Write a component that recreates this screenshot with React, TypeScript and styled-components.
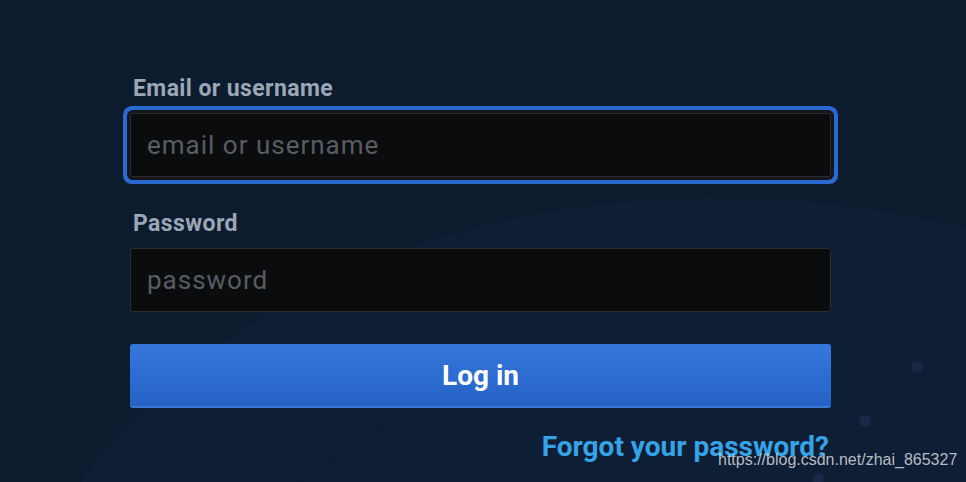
import React from "react";
import styled, { createGlobalStyle } from "styled-components";

const Global = createGlobalStyle`
  html, body {
    margin: 0;
    padding: 0;
    background: #0c1c2e;
    font-family: Roboto, "Liberation Sans", sans-serif;
  }
  * { box-sizing: border-box; }
`;

const Page = styled.div`
  position: relative;
  width: 966px;
  height: 482px;
  overflow: hidden;
  background: #0c1c2e;
  padding: 75px 0 0 130px;
`;

const Backdrop = styled.svg`
  position: absolute;
  inset: 0;
  width: 966px;
  height: 482px;
  pointer-events: none;
`;

const Form = styled.form`
  position: relative;
  width: 701px;
  display: flex;
  flex-direction: column;
`;

const Field = styled.div<{ $gapAfter: number }>`
  display: flex;
  flex-direction: column;
  margin-bottom: ${(p) => p.$gapAfter}px;
`;

const Label = styled.label`
  font-size: 23px;
  line-height: 28px;
  font-weight: 700;
  letter-spacing: 0.4px;
  color: #9ba7b6;
  padding-left: 3px;
  margin-bottom: 10px;
`;

const Input = styled.input<{ $focused?: boolean }>`
  width: 701px;
  height: 64px;
  background: #0b0c0e;
  border: 1px solid #2a2c30;
  border-radius: 3px;
  padding: 0 16px;
  font-family: Roboto, "Liberation Sans", sans-serif;
  font-size: 26px;
  letter-spacing: 1px;
  color: #d8d9da;
  outline: none;
  box-shadow: ${(p) =>
    p.$focused ? "0 0 0 3px #141619, 0 0 0 7px #2a69cf" : "none"};
  &::placeholder {
    color: #595c62;
  }
`;

const Button = styled.button`
  width: 701px;
  height: 64px;
  border: none;
  border-bottom: 2px solid #3b78d6;
  border-radius: 3px;
  background: linear-gradient(180deg, #3577db 0%, #2562c6 100%);
  color: #ffffff;
  font-family: Roboto, "Liberation Sans", sans-serif;
  font-size: 28px;
  font-weight: 700;
  cursor: pointer;
`;

const LinkRow = styled.div`
  display: flex;
  justify-content: flex-end;
  margin-top: 23px;
  padding-right: 2px;
`;

const Forgot = styled.a`
  font-size: 28px;
  line-height: 32px;
  font-weight: 700;
  color: #36a3e6;
  text-decoration: none;
`;

const Watermark = styled.div`
  position: absolute;
  left: 718px;
  top: 450px;
  font-family: "Liberation Sans", Arial, sans-serif;
  font-size: 16px;
  line-height: 20px;
  color: rgba(214, 218, 224, 0.85);
  white-space: nowrap;
`;

export default function App() {
  return (
    <>
      <Global />
      <Page>
        <Backdrop viewBox="0 0 966 482">
          <path d="M 80 482 C 250 250, 600 140, 966 228 L 966 482 Z" fill="#0f1f38" opacity="0.75" />
          <path d="M 300 482 C 500 330, 750 280, 966 330 L 966 482 Z" fill="#0d1d33" opacity="0.5" />
          <circle cx="917" cy="367" r="6" fill="#1a2745" />
          <circle cx="865" cy="421" r="6" fill="#1a2745" />
          <circle cx="818" cy="479" r="6" fill="#1a2745" />
        </Backdrop>
        <Form onSubmit={(e) => e.preventDefault()}>
          <Field $gapAfter={33}>
            <Label>Email or username</Label>
            <Input $focused placeholder="email or username" />
          </Field>
          <Field $gapAfter={32}>
            <Label>Password</Label>
            <Input type="password" placeholder="password" />
          </Field>
          <Button type="submit">Log in</Button>
          <LinkRow>
            <Forgot href="#">Forgot your password?</Forgot>
          </LinkRow>
        </Form>
        <Watermark>https://blog.csdn.net/zhai_865327</Watermark>
      </Page>
    </>
  );
}
